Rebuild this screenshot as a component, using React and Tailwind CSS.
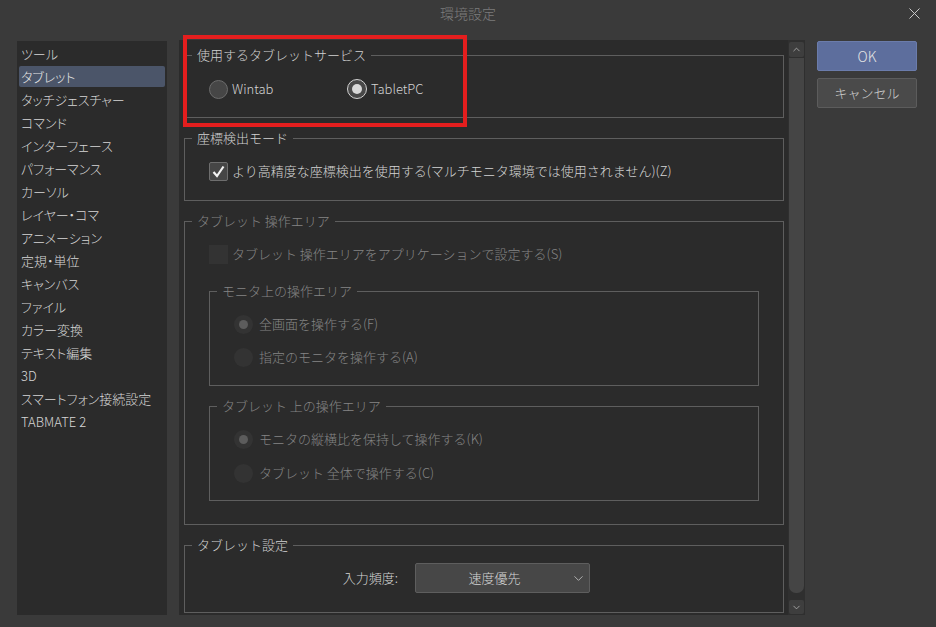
import { X, ChevronDown, ChevronUp } from "lucide-react";

const MENU = [
  "ツール",
  "タブレット",
  "タッチジェスチャー",
  "コマンド",
  "インターフェース",
  "パフォーマンス",
  "カーソル",
  "レイヤー・コマ",
  "アニメーション",
  "定規・単位",
  "キャンバス",
  "ファイル",
  "カラー変換",
  "テキスト編集",
  "3D",
  "スマートフォン接続設定",
  "TABMATE 2",
];

function Radio({ checked, disabled }) {
  if (disabled) {
    return (
      <span className="w-[19px] h-[19px] rounded-full bg-[#333333] flex items-center justify-center shrink-0">
        {checked && <span className="w-[9px] h-[9px] rounded-full bg-[#5c5c5c]" />}
      </span>
    );
  }
  if (checked) {
    return (
      <span className="w-[20px] h-[20px] rounded-full border-[1.5px] border-[#d2d2d2] bg-[#484848] flex items-center justify-center shrink-0">
        <span className="w-[10px] h-[10px] rounded-full bg-[#d8d8d8]" />
      </span>
    );
  }
  return <span className="w-[19px] h-[19px] rounded-full border border-[#6c6c6c] bg-[#464646] shrink-0" />;
}

function Group({ title, disabled, className = "", children }) {
  return (
    <fieldset className={`border border-[#5e5e5e] ${className}`}>
      <legend
        className={`ml-[7px] px-[5px] text-[13px] leading-[18px] ${
          disabled ? "text-[#858585]" : "text-[#d2d2d2]"
        }`}
      >
        {title}
      </legend>
      {children}
    </fieldset>
  );
}

export default function App() {
  return (
    <div className="relative w-[936px] h-[627px] bg-[#3a3a3a] overflow-hidden flex flex-col font-['Noto_Sans_CJK_JP','Liberation_Sans',sans-serif] font-light text-[13px] text-[#d4d4d4]">
      {/* title bar */}
      <div className="h-[27px] grid grid-cols-[1fr_auto_1fr] items-center">
        <div />
        <div className="text-[14px] text-[#7c7c7c]">環境設定</div>
        <div className="flex justify-end pr-[12px]">
          <X size={19} strokeWidth={1.2} className="text-[#d0d0d0]" />
        </div>
      </div>

      <div className="flex pt-[13px] pl-[17px]">
        {/* sidebar */}
        <div className="w-[150px] h-[574px] mt-[1px] bg-[#2b2b2b] pt-[1px] [font-feature-settings:'palt']">
          {MENU.map((m, i) => (
            <div key={m} className="h-[23px] px-[2px] py-[1px]">
              <div
                className={`h-full flex items-center pl-[2px] rounded-[2px] ${
                  i === 1 ? "bg-[#4b5569] text-[#e6e6e6]" : "text-[#d6d6d6]"
                }`}
              >
                {m}
              </div>
            </div>
          ))}
        </div>

        {/* main panel */}
        <div className="ml-[12px] w-[626px] h-[575px] bg-[#2b2b2b] flex">
          <div className="w-[609px] pl-[5px] pr-[4px] pt-[6px] flex flex-col">
            <Group title="使用するタブレットサービス">
              <div className="h-[53px] pb-[3px] pl-[24px] flex items-center">
                <div className="w-[138px] flex items-center gap-[4px]">
                  <Radio />
                  <span className="text-[#d4d4d4]">Wintab</span>
                </div>
                <div className="flex items-center gap-[4px]">
                  <Radio checked />
                  <span className="text-[#d4d4d4]">TabletPC</span>
                </div>
              </div>
            </Group>

            <Group title="座標検出モード" className="mt-[11px]">
              <div className="h-[53px] pb-[5px] pl-[24px] flex items-center gap-[4px]">
                <span className="w-[19px] h-[19px] rounded-[2px] border border-[#6e6e6e] bg-[#464646] flex items-center justify-center">
                  <svg width="15" height="15" viewBox="0 0 15 15">
                    <path d="M2.5 8 L6 12 L12.5 2.5" fill="none" stroke="#f2f2f2" strokeWidth="2.2" />
                  </svg>
                </span>
                <span>より高精度な座標検出を使用する(マルチモニタ環境では使用されません)(Z)</span>
              </div>
            </Group>

            <Group title="タブレット 操作エリア" disabled className="mt-[11px] h-[313px]">
              <div className="px-[24px] pt-[14px] flex flex-col">
                <div className="h-[20px] flex items-center gap-[4px] text-[#858585]">
                  <span className="w-[19px] h-[19px] bg-[#333333]" />
                  <span>タブレット 操作エリアをアプリケーションで設定する(S)</span>
                </div>

                <Group title="モニタ上の操作エリア" disabled className="mt-[18px] h-[104px]">
                  <div className="pl-[24px] pt-[14px] flex flex-col gap-[13px] text-[#858585]">
                    <div className="h-[20px] flex items-center gap-[6px]">
                      <Radio checked disabled />
                      <span>全画面を操作する(F)</span>
                    </div>
                    <div className="h-[20px] flex items-center gap-[6px]">
                      <Radio disabled />
                      <span>指定のモニタを操作する(A)</span>
                    </div>
                  </div>
                </Group>

                <Group title="タブレット 上の操作エリア" disabled className="mt-[11px] h-[104px]">
                  <div className="pl-[24px] pt-[14px] flex flex-col gap-[14px] text-[#858585]">
                    <div className="h-[20px] flex items-center gap-[6px]">
                      <Radio checked disabled />
                      <span>モニタの縦横比を保持して操作する(K)</span>
                    </div>
                    <div className="h-[20px] flex items-center gap-[6px]">
                      <Radio disabled />
                      <span>タブレット 全体で操作する(C)</span>
                    </div>
                  </div>
                </Group>
              </div>
            </Group>

            <Group title="タブレット設定" className="mt-[11px] h-[77px]">
              <div className="pt-[9px] flex items-center">
                <span className="w-[213px] text-right">入力頻度:</span>
                <div className="ml-[17px] w-[175px] h-[30px] bg-[#474747] border border-[#5e5e5e] rounded-[2px] flex items-center">
                  <span className="flex-1 text-center pl-[2px]">速度優先</span>
                  <ChevronDown size={15} strokeWidth={1.4} className="mr-[3px] text-[#bdbdbd]" />
                </div>
              </div>
            </Group>
          </div>

          {/* scrollbar */}
          <div className="w-[17px] bg-[#2f2f2f] px-[1px] pt-[2px] flex flex-col">
            <div className="h-[15px] rounded-[2px] bg-[#3e3e3e] flex items-center justify-center">
              <ChevronUp size={11} strokeWidth={1.6} className="text-[#bfbfbf]" />
            </div>
            <div className="mt-[1px] h-[535px] rounded-b-[7px] bg-[#454545]" />
            <div className="mt-[7px] h-[14px] rounded-[2px] bg-[#3e3e3e] flex items-center justify-center">
              <ChevronDown size={11} strokeWidth={1.6} className="text-[#bfbfbf]" />
            </div>
          </div>
        </div>

        {/* buttons */}
        <div className="pl-[12px] pt-[1px] flex flex-col gap-[7px]">
          <div className="w-[100px] h-[30px] rounded-[2px] bg-[#5d6e9d] border border-[#6b7cab] flex items-center justify-center text-[14px] text-[#e4e4e4]">
            OK
          </div>
          <div className="w-[100px] h-[30px] rounded-[2px] bg-[#4a4a4a] border border-[#5c5c5c] flex items-center justify-center text-[#cfcfcf]">
            キャンセル
          </div>
        </div>
      </div>

      {/* annotation */}
      <div className="absolute left-[183px] top-[35px] w-[284px] h-[92px] border-[4px] border-[#e41e1e] pointer-events-none" />
    </div>
  );
}
